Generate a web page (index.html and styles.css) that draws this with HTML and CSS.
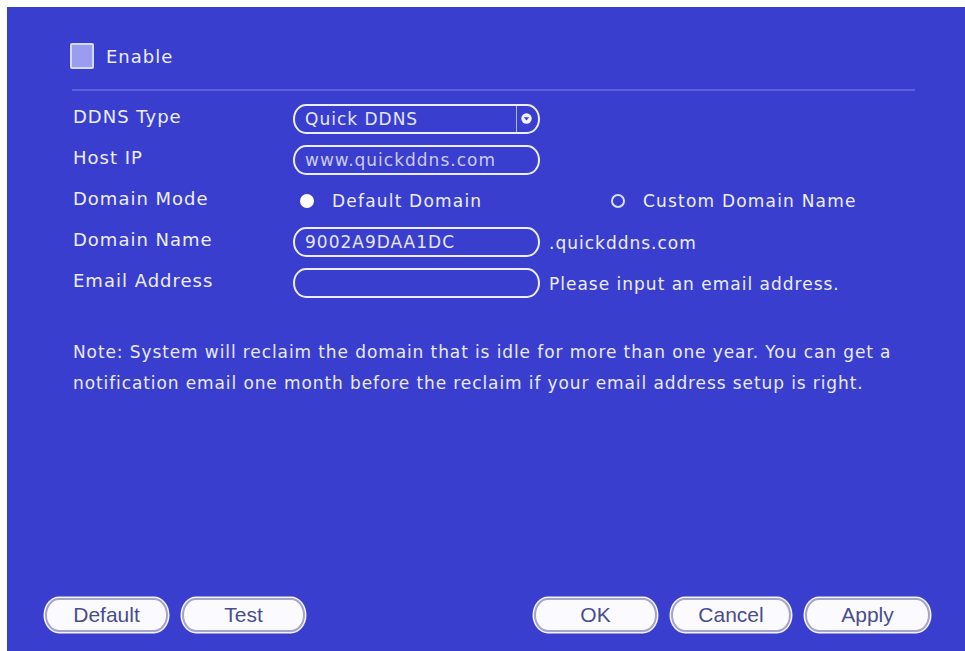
FILE: index.html
```html
<!DOCTYPE html>
<html lang="en">

<head>
    <meta charset="UTF-8">
    <title>DDNS</title>
    <link rel="stylesheet" href="styles.css">
</head>

<body>
    <section class="screen">
        <div class="enable-row">
            <span class="checkbox"></span>
            <span class="enable-label">Enable</span>
        </div>

        <div class="divider"></div>

        <div class="form">
            <div class="row">
                <span class="label">DDNS Type</span>
                <div class="field select">
                    <span class="field-text">Quick DDNS</span>
                    <span class="select-arrow">
                        <svg width="11" height="11" viewBox="0 0 11 11">
                            <circle cx="5.5" cy="5.5" r="5.2" fill="#f2f3ff" />
                            <path d="M2.8 4.2 L8.2 4.2 L5.5 7.6 Z" fill="#3a3ecf" />
                        </svg>
                    </span>
                </div>
            </div>
            <div class="row">
                <span class="label">Host IP</span>
                <div class="field"><span class="field-text dim">www.quickddns.com</span></div>
            </div>
            <div class="row">
                <span class="label">Domain Mode</span>
                <div class="radio radio-default">
                    <span class="dot checked"></span>
                    <span>Default Domain</span>
                </div>
                <div class="radio radio-custom">
                    <span class="dot"></span>
                    <span>Custom Domain Name</span>
                </div>
            </div>
            <div class="row">
                <span class="label">Domain Name</span>
                <div class="field"><span class="field-text">9002A9DAA1DC</span></div>
                <span class="suffix">.quickddns.com</span>
            </div>
            <div class="row">
                <span class="label">Email Address</span>
                <div class="field"></div>
                <span class="suffix">Please input an email address.</span>
            </div>
        </div>

        <p class="note">
            Note: System will reclaim the domain that is idle for more than one year. You can get a<br>
            notification email one month before the reclaim if your email address setup is right.
        </p>

        <div class="buttons">
            <div class="btn-group">
                <button class="btn">Default</button>
                <button class="btn">Test</button>
            </div>
            <div class="btn-group">
                <button class="btn">OK</button>
                <button class="btn btn-cancel">Cancel</button>
                <button class="btn btn-apply">Apply</button>
            </div>
        </div>
    </section>
</body>

</html>
```

FILE: styles.css
```css
body {
    margin: 0;
    padding: 0;
    background: #fff;
    font-family: "DejaVu Sans", Verdana, sans-serif;
}

.screen {
    margin: 7px 0 0 7px;
    height: 644px;
    box-sizing: border-box;
    background: #3a3ecf;
    color: #eceeff;
    display: flex;
    flex-direction: column;
    padding-top: 36px;
}

.enable-row {
    display: flex;
    align-items: center;
    padding-left: 63px;
    height: 26px;
}

.checkbox {
    width: 24px;
    height: 26px;
    box-sizing: border-box;
    background: #9a9cf0;
    border: 2px solid #d6d8ff;
    border-radius: 2px;
}

.enable-label {
    margin-left: 12px;
    font-size: 18px;
    letter-spacing: 1px;
}

.divider {
    margin: 20px 50px 0 65px;
    height: 2px;
    background: #5c60dc;
}

.form {
    margin: 7px 0 0 66px;
}

.row {
    display: grid;
    grid-template-columns: 220px 256px 1fr;
    align-items: center;
    height: 41px;
}

.label {
    font-size: 18px;
    letter-spacing: 1px;
    margin-top: -5px;
}

.field {
    width: 247px;
    height: 30px;
    box-sizing: border-box;
    border: 2px solid #eceeff;
    border-radius: 13px / 15px;
    display: flex;
    align-items: center;
    padding-left: 10px;
}

.field-text {
    font-size: 17px;
    letter-spacing: 1px;
    color: #e4e6ff;
}

.field-text.dim {
    color: #c9cbf4;
}

.select {
    justify-content: space-between;
    padding-right: 0;
}

.select-arrow {
    width: 22px;
    height: 100%;
    border-left: 1px solid #b3b5f2;
    display: flex;
    align-items: center;
    justify-content: center;
    box-sizing: border-box;
    padding-right: 3px;
}

.suffix {
    font-size: 17px;
    letter-spacing: 1px;
    margin-top: 2px;
}

.radio {
    display: flex;
    align-items: center;
    font-size: 17px;
    letter-spacing: 1.2px;
}

.radio-default {
    margin-left: 7px;
    gap: 18px;
}

.radio-custom {
    margin-left: 62px;
    gap: 18px;
}

.dot {
    width: 14px;
    height: 14px;
    flex: none;
    box-sizing: border-box;
    border-radius: 50%;
    border: 2px solid #dcdeff;
}

.dot.checked {
    background: #fff;
    border-color: #fff;
}

.note {
    margin: 34px 0 0 66px;
    font-size: 17px;
    line-height: 31px;
    letter-spacing: 0.9px;
    color: #e8eaff;
}

.buttons {
    margin-top: auto;
    display: flex;
    justify-content: space-between;
    padding: 0 35px 19px 38px;
}

.btn-group {
    display: flex;
    gap: 14px;
}

.btn {
    width: 123px;
    height: 34px;
    box-sizing: border-box;
    background: #fbfbff;
    border: 2px solid #a4a5c8;
    border-radius: 14px / 17px;
    box-shadow: 0 0 0 1.5px #f4f4ff;
    font-family: "Liberation Sans", Arial, sans-serif;
    font-size: 21px;
    color: #4a4d8c;
    padding: 0;
}

.btn-cancel {
    width: 120px;
}

.btn-apply {
    width: 125px;
}
```
